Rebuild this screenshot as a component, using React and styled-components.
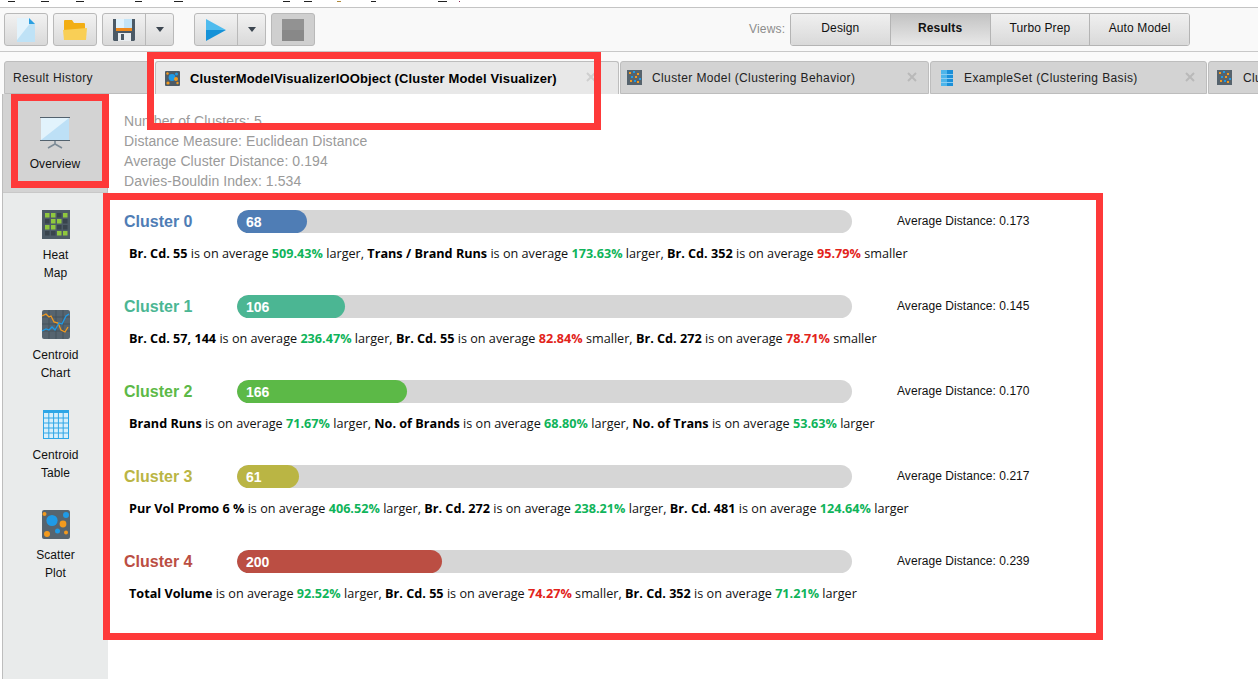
import React from "react";
import styled, { createGlobalStyle } from "styled-components";

const Global = createGlobalStyle`
  html, body { margin: 0; padding: 0; background: #fff; overflow: hidden; }
  #root { width: 1258px; height: 679px; }
  * { box-sizing: border-box; }
`;

const Page = styled.div`
  position: relative; width: 1258px; height: 679px; overflow: hidden; background: #fff;
  display: flex; flex-direction: column; font-family: "Liberation Sans", Arial, sans-serif; color: #111;
`;
const MenuStrip = styled.div`
  height: 8px; flex: none; display: flex; align-items: flex-start; padding-top: 1px; border-bottom: 1px solid #c4c4c4; background: #fff;
`;
const Mnemonic = styled.span`
  display: block; flex: none; height: 1px; width: ${p => p.$w}px; margin-left: ${p => p.$gap}px; background: ${p => p.$c || "#222"};
`;
const Toolbar = styled.div`
  height: 44px; flex: none; display: flex; align-items: flex-start; padding: 5px 0 0 4px; background: #f9f9f9; border-bottom: 1px solid #c8c8c8;
`;
const ToolButton = styled.div`
  width: ${p => p.$w || 44}px; height: 33px; flex: none; margin-left: ${p => p.$ml || 0}px;
  display: flex; align-items: center; justify-content: center;
  border: 1px solid #b9b9b9; border-radius: 3px;
  background: ${p => p.$off ? "#cfcfcf" : "linear-gradient(#f2f2f2, #d9d9d9)"};
`;
const SplitButton = styled.div`
  width: 72px; height: 33px; flex: none; margin-left: ${p => p.$ml || 0}px; display: flex;
  border: 1px solid #b9b9b9; border-radius: 3px; background: linear-gradient(#f2f2f2, #d9d9d9);
`;
const SplitMain = styled.div`
  width: 43px; display: flex; align-items: center; justify-content: center; border-right: 1px solid #b9b9b9;
`;
const SplitArrow = styled.div`
  flex: 1; display: flex; align-items: center; justify-content: center;
`;
const Caret = styled.span`
  width: 0; height: 0; border-left: 4px solid transparent; border-right: 4px solid transparent; border-top: 5px solid #3c4650;
`;
const ViewsLabel = styled.span`
  margin-left: 434px; width: 41px; font-size: 12px; color: #8c8c8c; line-height: 33px; letter-spacing: 0.2px;
`;
const ViewGroup = styled.div`
  display: flex; width: 400px; height: 33px; border: 1px solid #b4b4b4; border-radius: 3px; overflow: hidden;
`;
const ViewButton = styled.div`
  flex: 1; display: flex; align-items: center; justify-content: center; font-size: 12px; letter-spacing: 0.12px; padding-bottom: 3px;
  font-weight: ${p => p.$on ? 700 : 400};
  background: ${p => p.$on ? "linear-gradient(#c3c3c3, #e8e8e8)" : "linear-gradient(#f0f0f0, #d9d9d9)"};
  & + & { border-left: 1px solid #b4b4b4; }
`;
const TabStrip = styled.div`
  height: 42px; flex: none; padding: 9px 0 0 4px; display: flex; gap: 1px; background: #fafafa; overflow: hidden;
`;
const Tab = styled.div`
  width: ${p => p.$w}px; height: 33px; flex: none; display: flex; align-items: center; position: relative;
  padding-left: ${p => p.$pl}px; font-size: ${p => p.$on ? 13 : 12}px; letter-spacing: ${p => p.$on ? "0.13px" : "0.38px"};
  font-weight: ${p => p.$on ? 700 : 400};
  background: ${p => p.$on ? "#e8e8e8" : "#d3d3d3"};
  border: 1px solid #bdbdbd; border-bottom: ${p => p.$on ? "none" : "1px solid #bdbdbd"};
  border-radius: 3px 3px 0 0; color: ${p => p.$on ? "#000" : "#222"};
`;
const TabIcon = styled.span`
  display: flex; flex: none; width: 15px; margin-right: ${p => p.$mr || 10}px;
`;
const Close = styled.svg`
  position: absolute; right: ${p => p.$r}px; top: 10px; width: 10px; height: 10px;
`;
const Main = styled.div`
  flex: 1; display: flex; min-height: 0; padding-left: 2px;
`;
const Sidebar = styled.nav`
  width: 106px; flex: none; background: #e9ebeb; border-left: 1px solid #bdbdbd; display: flex; flex-direction: column;
`;
const SideItem = styled.div`
  height: ${p => p.$on ? 99 : 100}px; flex: none; display: flex; flex-direction: column; align-items: center;
  padding-top: ${p => p.$on ? 23 : 17}px; font-size: 12px; line-height: 18px; text-align: center; color: #111; letter-spacing: 0.08px;
  background: ${p => p.$on ? "#d3d3d3" : "transparent"};
  ${p => p.$on ? "border-right: 1px solid #bdbdbd; border-bottom: 1px solid #c8c8c8;" : ""}
`;
const SideIcon = styled.svg`
  width: 30px; height: ${p => p.$on ? 32 : 29}px; margin-bottom: ${p => p.$on ? 6 : 7}px; flex: none;
`;
const Content = styled.main`
  flex: 1; padding: 17px 0 0 16px; background: #fff;
`;
const Stat = styled.div`
  font-size: 14px; line-height: 20px; color: #9a9a9a; letter-spacing: 0.08px;
`;
const ClusterList = styled.div`
  margin-top: 19px; display: flex; flex-direction: column; gap: 33px;
`;
const Cluster = styled.section`
  display: flex; flex-direction: column;
`;
const ClusterHead = styled.div`
  display: flex; align-items: center; height: 23px;
`;
const ClusterName = styled.div`
  width: 113px; flex: none; font-size: 16px; font-weight: 700; color: ${p => p.$c};
`;
const Track = styled.div`
  width: 615px; height: 23px; flex: none; border-radius: 11.5px; background: #d6d6d6; overflow: hidden;
`;
const Fill = styled.div`
  height: 23px; border-radius: 11.5px; padding-left: 9px; font-size: 14px; font-weight: 700; line-height: 25px; color: #fff; background: ${p => p.$c};
`;
const AvgDist = styled.div`
  margin: 0 0 2px 45px; font-size: 12px; color: #111; letter-spacing: 0.06px;
`;
const Desc = styled.p`
  margin: 11px 0 0 5px; font-family: "Open Sans", sans-serif; font-size: 12.65px; line-height: 18px; color: #111; white-space: nowrap;
  b { font-weight: 700; color: #000; }
`;
const Pct = styled.b`
  && { color: ${p => p.$up ? "#0fb45a" : "#e2231a"}; }
`;
const Annotation = styled.div`
  position: absolute; left: ${p => p.$x}px; top: ${p => p.$y}px; width: ${p => p.$w}px; height: ${p => p.$h}px;
  border: 7px solid #fe3939; pointer-events: none;
`;

const ClusterGlyph = ({ size = 15 }) => (
  <svg width={size} height={size} viewBox="0 0 15 15">
    <rect width="15" height="15" rx="1" fill="#4e5b66" />
    <circle cx="7" cy="6.5" r="3.4" fill="#1f9ae6" />
    <circle cx="11.5" cy="3" r="1.5" fill="#1f9ae6" />
    <circle cx="11" cy="8" r="2" fill="#f39a1e" />
    <circle cx="3" cy="12" r="1.6" fill="#f39a1e" />
    <circle cx="2.5" cy="2.5" r="1.2" fill="#f39a1e" />
    <circle cx="12.5" cy="12" r="1.2" fill="#f39a1e" />
  </svg>
);
const ClusterDim = () => (
  <svg width="15" height="15" viewBox="0 0 15 15">
    <rect width="15" height="15" fill="#56636d" />
    {[[2,2,"#f39a1e"],[6,1,"#1f9ae6"],[10,3,"#f39a1e"],[4,6,"#1f9ae6"],[8,6,"#f39a1e"],[12,8,"#1f9ae6"],[3,10,"#f39a1e"],[7,10,"#1f9ae6"],[10,11,"#f39a1e"]].map(([x,y,c],i)=>(
      <rect key={i} x={x} y={y} width="2" height="2" fill={c} />
    ))}
  </svg>
);
const TableGlyph = () => (
  <svg width="12" height="16" viewBox="0 0 12 16">
    <rect width="12" height="16" fill="#1b8fd8" />
    <rect width="6" height="16" fill="#4db5ea" />
    <path d="M0 4.500h12M0 8.500h12M0 12.500h12" stroke="#8ccdf2" strokeWidth="1" />
  </svg>
);
const CloseIcon = ({ r, light }) => (
  <Close $r={r} viewBox="0 0 10 10">
    <path d="M1 1l8 8M9 1l-8 8" stroke={light ? "#cfcfcf" : "#b9b9b9"} strokeWidth="2" />
  </Close>
);

const clusters = [
  { name: "Cluster 0", n: 68, w: 70, c: "#4f7db5", d: "0.173", parts: [["Br. Cd. 55","509.43%",1],["Trans / Brand Runs","173.63%",1],["Br. Cd. 352","95.79%",0]] },
  { name: "Cluster 1", n: 106, w: 108, c: "#4bb693", d: "0.145", parts: [["Br. Cd. 57, 144","236.47%",1],["Br. Cd. 55","82.84%",0],["Br. Cd. 272","78.71%",0]] },
  { name: "Cluster 2", n: 166, w: 170, c: "#5cb947", d: "0.170", parts: [["Brand Runs","71.67%",1],["No. of Brands","68.80%",1],["No. of Trans","53.63%",1]] },
  { name: "Cluster 3", n: 61, w: 62, c: "#bab544", d: "0.217", parts: [["Pur Vol Promo 6 %","406.52%",1],["Br. Cd. 272","238.21%",1],["Br. Cd. 481","124.64%",1]] },
  { name: "Cluster 4", n: 200, w: 205, c: "#bb4e43", d: "0.239", parts: [["Total Volume","92.52%",1],["Br. Cd. 55","74.27%",0],["Br. Cd. 352","71.21%",1]] },
];
const marks = [[8,7],[26,8],[27,8],[51,7],[32,9],[100,7],[14,8],[25,4,"#b08a3c"],[30,5],[62,9],[12,1,"#8a2050"]];

const heatCells = [1,1,0,1,0,1,1,0,1,1,0,0,0,0,1,1];

export default function App() {
  return (
    <Page>
      <Global />
      <MenuStrip>
        {marks.map(([g, w, c], i) => <Mnemonic key={i} $gap={g} $w={w} $c={c} />)}
      </MenuStrip>
      <Toolbar>
        <ToolButton>
          <svg width="18" height="24" viewBox="0 0 18 24">
            <path d="M0 0h12l6 6v18H0z" fill="#bfe2f6" />
            <path d="M0 0h12l3 3L0 22z" fill="#e3f3fc" />
            <path d="M12 0l6 6h-6z" fill="#2b9fe0" />
          </svg>
        </ToolButton>
        <ToolButton $ml={5}>
          <svg width="24" height="20" viewBox="0 0 24 20">
            <path d="M1 1a1 1 0 0 1 1-1h7l2 3h10a1 1 0 0 1 1 1v6H1z" fill="#f2ae14" />
            <path d="M0 10l24-2-1 12H1z" fill="#f9cf56" />
          </svg>
        </ToolButton>
        <SplitButton $ml={5}>
          <SplitMain>
            <svg width="22" height="22" viewBox="0 0 22 22">
              <path d="M0 0h22v21l-1 1H1l-1-1z" fill="#4c5a66" />
              <rect x="3" y="0" width="16" height="9" fill="#c3e4f7" />
              <rect x="3" y="0" width="8" height="9" fill="#e2f3fc" />
              <rect x="3" y="9" width="16" height="3" fill="#ef8a1d" />
              <rect x="5" y="14" width="13" height="8" fill="#e9edf0" />
              <rect x="8" y="15" width="3" height="6" fill="#4c5a66" />
            </svg>
          </SplitMain>
          <SplitArrow><Caret /></SplitArrow>
        </SplitButton>
        <SplitButton $ml={20}>
          <SplitMain>
            <svg width="20" height="22" viewBox="0 0 20 22">
              <path d="M0 0l20 11H0z" fill="#4ebbee" />
              <path d="M0 11h20L0 22z" fill="#1592d8" />
            </svg>
          </SplitMain>
          <SplitArrow><Caret /></SplitArrow>
        </SplitButton>
        <ToolButton $ml={5} $off>
          <svg width="22" height="22" viewBox="0 0 22 22">
            <rect width="22" height="11" fill="#929292" />
            <rect y="11" width="22" height="11" fill="#888" />
          </svg>
        </ToolButton>
        <ViewsLabel>Views:</ViewsLabel>
        <ViewGroup>
          <ViewButton>Design</ViewButton>
          <ViewButton $on>Results</ViewButton>
          <ViewButton>Turbo Prep</ViewButton>
          <ViewButton>Auto Model</ViewButton>
        </ViewGroup>
      </Toolbar>
      <TabStrip>
        <Tab $w={150} $pl={8}>Result History</Tab>
        <Tab $w={464} $pl={9} $on>
          <TabIcon $mr={10}><ClusterGlyph /></TabIcon>
          ClusterModelVisualizerIOObject (Cluster Model Visualizer)
          <CloseIcon r={22} light />
        </Tab>
        <Tab $w={309} $pl={6}>
          <TabIcon $mr={10}><ClusterDim /></TabIcon>
          Cluster Model (Clustering Behavior)
          <CloseIcon r={11} />
        </Tab>
        <Tab $w={277} $pl={10}>
          <TabIcon $mr={8}><TableGlyph /></TabIcon>
          ExampleSet (Clustering Basis)
          <CloseIcon r={11} />
        </Tab>
        <Tab $w={60} $pl={8}>
          <TabIcon $mr={11}><ClusterDim /></TabIcon>
          Clu
        </Tab>
      </TabStrip>
      <Main>
        <Sidebar>
          <SideItem $on>
            <SideIcon $on viewBox="0 0 30 32">
              <path d="M1 1h28v22H1z" fill="#bde0f6" />
              <path d="M1 1h28L1 23z" fill="#e2f3fc" />
              <path d="M0 0.5h30M0 23.5h30" stroke="#53626e" strokeWidth="1" />
              <path d="M15 24v4M15 27l-7 4M15 27l7 4" stroke="#7c8b96" strokeWidth="1.6" fill="none" />
            </SideIcon>
            Overview
          </SideItem>
          <SideItem>
            <SideIcon viewBox="0 0 28 29">
              <rect width="28" height="29" fill="#4d5b66" />
              {heatCells.map((on, i) => (
                <rect key={i} x={3 + (i % 4) * 6} y={3 + Math.floor(i / 4) * 6} width="4.5" height="4.5" fill={on ? "#8fc73e" : "#39444d"} />
              ))}
            </SideIcon>
            Heat<br />Map
          </SideItem>
          <SideItem>
            <SideIcon viewBox="0 0 28 29">
              <rect width="28" height="29" rx="2" fill="#56646f" />
              <path d="M0 7h28M0 14h28M0 21h28M7 0v29M14 0v29M21 0v29" stroke="#45525c" strokeWidth="1" />
              <path d="M0 6l4-2 3 3 2-1 3 6 4 1 3 7 4 2 3-5" stroke="#f39a1e" strokeWidth="1.3" fill="none" />
              <path d="M0 21l4-2 3 1 3-3 3 3 4-7 3 1 4-8 3-2" stroke="#1f9ae6" strokeWidth="1.3" fill="none" />
            </SideIcon>
            Centroid<br />Chart
          </SideItem>
          <SideItem>
            <SideIcon viewBox="0 0 28 29">
              <rect x="1" width="26" height="29" fill="#2ea6e6" />
              <rect x="2" y="3" width="24" height="25" fill="#d8effb" />
              <path d="M6.8 3v25M11.6 3v25M16.4 3v25M21.2 3v25M2 8h24M2 13h24M2 18h24M2 23h24" stroke="#2ea6e6" strokeWidth="1" />
            </SideIcon>
            Centroid<br />Table
          </SideItem>
          <SideItem>
            <SideIcon viewBox="0 0 28 29">
              <rect width="28" height="29" rx="2" fill="#56646f" />
              <circle cx="10" cy="10.5" r="5.6" fill="#1f9ae6" />
              <circle cx="24" cy="5" r="3" fill="#1f9ae6" />
              <circle cx="15.500" cy="21" r="2.5" fill="#1f9ae6" />
              <circle cx="21" cy="14" r="3.400" fill="#f39a1e" />
              <circle cx="5" cy="24" r="3" fill="#f39a1e" />
              <circle cx="2.500" cy="4" r="2" fill="#f39a1e" />
              <circle cx="24" cy="22.500" r="2" fill="#f39a1e" />
            </SideIcon>
            Scatter<br />Plot
          </SideItem>
        </Sidebar>
        <Content>
          <Stat>Number of Clusters: 5</Stat>
          <Stat>Distance Measure: Euclidean Distance</Stat>
          <Stat>Average Cluster Distance: 0.194</Stat>
          <Stat>Davies-Bouldin Index: 1.534</Stat>
          <ClusterList>
            {clusters.map(cl => (
              <Cluster key={cl.name}>
                <ClusterHead>
                  <ClusterName $c={cl.c}>{cl.name}</ClusterName>
                  <Track><Fill $c={cl.c} style={{ width: cl.w }}>{cl.n}</Fill></Track>
                  <AvgDist>Average Distance: {cl.d}</AvgDist>
                </ClusterHead>
                <Desc>
                  {cl.parts.map(([attr, pct, up], i) => (
                    <React.Fragment key={i}>
                      {i > 0 && ", "}
                      <b>{attr}</b> is on average <Pct $up={up}>{pct}</Pct> {up ? "larger" : "smaller"}
                    </React.Fragment>
                  ))}
                </Desc>
              </Cluster>
            ))}
          </ClusterList>
        </Content>
      </Main>
      <Annotation $x={147} $y={52} $w={454} $h={78} />
      <Annotation $x={11} $y={94} $w={98} $h={94} />
      <Annotation $x={103} $y={193} $w={1000} $h={447} />
    </Page>
  );
}
